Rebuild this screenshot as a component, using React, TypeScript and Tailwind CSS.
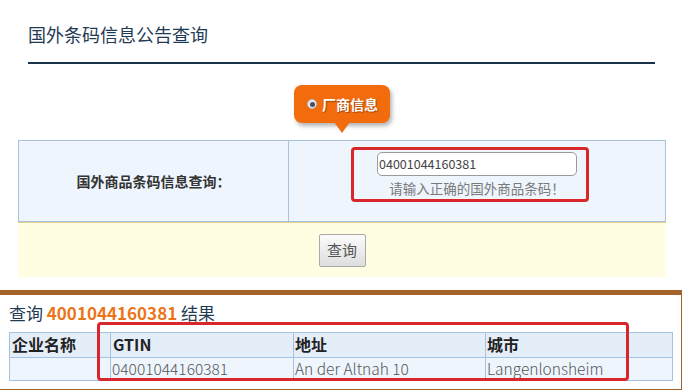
import React from "react";

const F = "font-['Noto_Sans_CJK_SC','Noto_Sans',sans-serif]";

export default function App() {
  return (
    <div className={`w-[686px] h-[392px] bg-white overflow-hidden ${F}`}>
      <div className="pt-[22px] pl-[28px] text-[18px] leading-[24px] text-[#1f3b53]">国外条码信息公告查询</div>
      <div className="mt-[16px] ml-[28px] w-[627px] h-[2px] bg-[#1b3349]"></div>

      <div className="mt-[21px] ml-[18px] w-[648px] flex justify-center">
        <div className="relative w-[96px] h-[38px] rounded-[8px] bg-[#f26b0c] shadow-[2px_3px_4px_rgba(0,0,0,0.3)] flex items-center pl-[13px] gap-[5px]">
          <span className="w-[10px] h-[10px] rounded-full bg-[#e8e8ee] border border-[#bbb] flex items-center justify-center">
            <span className="w-[5px] h-[5px] rounded-full bg-[#4a4f66]"></span>
          </span>
          <span className="text-white font-bold text-[14px] leading-[16px] [text-shadow:1px_1px_1px_rgba(0,0,0,0.35)]">厂商信息</span>
          <span className="absolute left-[40px] top-[37px] w-0 h-0 border-l-[8px] border-r-[8px] border-t-[11px] border-l-transparent border-r-transparent border-t-[#f26b0c]"></span>
        </div>
      </div>

      <div className="mt-[17px] ml-[18px] w-[648px]">
        <div className="flex h-[82px] border border-[#a8c2d8] bg-[#eef5fd]">
          <div className="w-[270px] border-r border-[#a8c2d8] flex items-center justify-center text-[14px] font-bold text-[#333]">
            国外商品条码信息查询：
          </div>
          <div className="relative flex-1 flex flex-col items-center pt-[11px]">
            <div className="w-[200px] h-[24px] rounded-[5px] border border-[#9a9a9a] bg-white flex items-center pl-[1px] text-[12.5px] text-[#444]">
              04001044160381
            </div>
            <div className="mt-[3px] text-[13.5px] leading-[18px] text-[#7a7a7a]">请输入正确的国外商品条码！</div>
            <div className="absolute left-[62px] top-[6px] w-[238px] h-[55px] border-[3px] border-[#d8262a] rounded-[4px]"></div>
          </div>
        </div>
        <div className="h-[55px] bg-[#fffde2] border-t border-[#e6cf93] flex items-center justify-center">
          <div className="w-[47px] h-[33px] border border-[#a9a9a9] rounded-[2px] bg-gradient-to-b from-[#fbfbfb] to-[#dedede] flex items-center justify-center text-[15px] text-[#555]">
            查询
          </div>
        </div>
      </div>

      <div className="mt-[13px] w-[682px] h-[100px] border-t-[5px] border-r border-b border-[#a5622a] relative">
        <div className="pl-[9px] pt-[7px] text-[17px] leading-[22px] text-[#1f3b53]">
          查询 <span className="font-bold text-[#ec7419]">4001044160381</span> 结果
        </div>
        <div className="mt-[8px] ml-[9px] w-[664px] border border-[#a3c3e0]">
          <div className="flex h-[24px] bg-[#e4eef9] text-[16px] font-bold text-[#222] leading-[22px]">
            <div className="w-[101px] pl-[2px] border-r border-[#a3c3e0]">企业名称</div>
            <div className="w-[183px] pl-[2px] border-r border-[#a3c3e0]">GTIN</div>
            <div className="w-[192px] pl-[1px] border-r border-[#a3c3e0]">地址</div>
            <div className="flex-1 pl-[1px]">城市</div>
          </div>
          <div className="flex h-[23px] bg-[#eef5fd] border-t border-[#a3c3e0] text-[15.5px] font-light text-[#555] leading-[21px]">
            <div className="w-[101px] border-r border-[#a3c3e0]"></div>
            <div className="w-[183px] pl-[1px] border-r border-[#a3c3e0]">04001044160381</div>
            <div className="w-[192px] pl-[1px] border-r border-[#a3c3e0]">An der Altnah 10</div>
            <div className="flex-1 pl-[1px]">Langenlonsheim</div>
          </div>
        </div>
        <div className="absolute left-[97px] top-[27px] w-[532px] h-[59px] border-[3px] border-[#d8262a] rounded-[4px]"></div>
      </div>
    </div>
  );
}
